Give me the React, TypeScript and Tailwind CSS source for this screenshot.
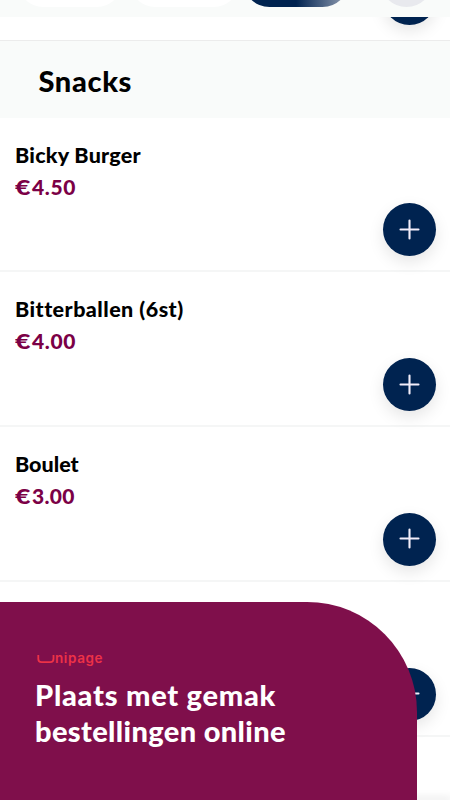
const items = [
  { name: "Bicky Burger", price: "4.50", nameCls: "tracking-[0.25px]", priceCls: "tracking-[0.6px]" },
  { name: "Bitterballen (6st)", price: "4.00", nameCls: "tracking-[0.45px]", priceCls: "tracking-[0.6px]" },
  { name: "Boulet", price: "3.00", nameCls: "tracking-[0px]", priceCls: "tracking-[0.3px]" },
  { name: "", price: "", nameCls: "", priceCls: "" },
];

function AddButton() {
  return (
    <button className="flex size-[53px] shrink-0 items-center justify-center rounded-full bg-[#002350] shadow-[0_6px_16px_rgba(0,0,0,0.10)]">
      <svg width="22" height="22" viewBox="0 0 22 22" fill="none" stroke="#f3eefa" strokeWidth="2.1" strokeLinecap="round">
        <path d="M10.5 1.5v18M1.5 10.5h18" />
      </svg>
    </button>
  );
}

export default function App() {
  return (
    <div className="relative h-[800px] w-[450px] overflow-hidden bg-white font-['Lato',sans-serif] font-black text-black">
      <header className="relative z-10 flex h-[17px] items-start bg-[#f9fbfa] pl-[17px]">
        <div className="-mt-[46px] h-[53px] w-[106px] shrink-0 rounded-full bg-white" />
        <div className="-mt-[46px] ml-[6px] h-[53px] w-[111px] shrink-0 rounded-full bg-white" />
        <div className="-mt-[46px] ml-[3px] h-[53px] w-[106px] shrink-0 rounded-full bg-linear-to-r from-[#002350] from-50% to-[#8b98ad] to-95%" />
        <div className="-mt-[46px] ml-[31px] h-[53px] w-[53px] shrink-0 rounded-full bg-[#e8e9ee]" />
      </header>
      <div className="flex h-[24px] items-end justify-end border-b border-[#ececec] pr-[14px] pb-[15px]">
        <AddButton />
      </div>
      <h1 className="relative flex h-[76.5px] items-center bg-[#f9fbfa] pt-[4px] pl-[38.5px] text-[29px] leading-9 tracking-[0.65px]">Snacks</h1>
      <main>
        {items.map((item, i) => (
          <section key={i} className="flex h-[154.75px] items-end justify-between border-b-2 border-[#f5f6f6] pr-[14px] pb-[14px] pl-[15px]">
            <div className="h-full pt-[23px]">
              <h2 className={`h-[32px] text-[21.5px] leading-7 whitespace-nowrap ${item.nameCls}`}>{item.name}</h2>
              {item.price && (
                <p className={`flex text-[21px] leading-7 text-[#7b0046] ${item.priceCls}`}>
                  <span className="inline-block w-[17px] origin-left scale-x-[1.28]">€</span>
                  <span>{item.price}</span>
                </p>
              )}
            </div>
            <AddButton />
          </section>
        ))}
      </main>
      <div className="absolute right-0 bottom-0 h-0 w-[40px] shadow-[0_0_8px_2px_rgba(0,0,0,0.12)]" />
      <aside className="absolute bottom-0 left-0 h-[198px] w-[417px] rounded-tr-[110px] bg-[#7f0f4b] pt-[47px] pl-[35px] text-white">
        <div className="flex h-[20px] items-center pl-[2px] text-[#ed3247]">
          <svg className="-mt-px" width="18" height="10" viewBox="0 0 18 10" fill="none" stroke="currentColor" strokeWidth="1.8">
            <path d="M1.3 1v4q0 3.2 3.2 3.2h8.8q3.2 0 3.2-3.2V1" />
          </svg>
          <span className="-mt-[2px] font-['Inter',sans-serif] text-[13.5px] leading-5 font-semibold tracking-[0.6px]">nipage</span>
        </div>
        <p className="mt-[8px] text-[29px] leading-[36px] font-black whitespace-nowrap">
          <span className="block tracking-[0.75px]">Plaats met gemak</span>
          <span className="block tracking-[0.36px]">bestellingen online</span>
        </p>
      </aside>
    </div>
  );
}
